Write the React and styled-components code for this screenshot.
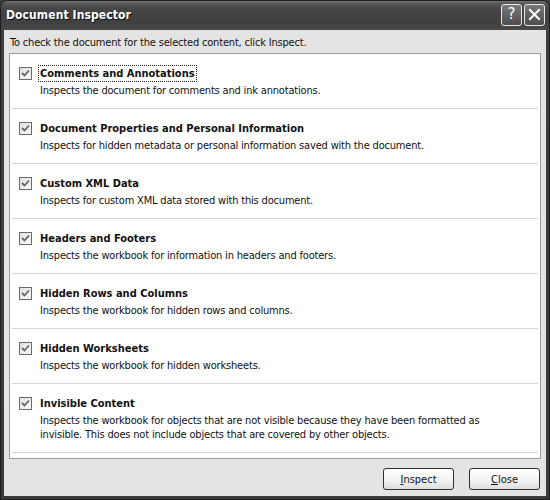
import React from "react";
import styled, { createGlobalStyle } from "styled-components";

const Global = createGlobalStyle`
  html, body { margin: 0; padding: 0; background: #3a3a3a; }
  body { font-family: "DejaVu Sans Condensed", "DejaVu Sans", Tahoma, sans-serif; }
  * { box-sizing: border-box; }
`;

const Window = styled.div`
  width: 550px;
  height: 500px;
  display: flex;
  flex-direction: column;
  background: linear-gradient(#6a6a6a, #3e3e3e 30px, #3a3a3a);
  border-radius: 8px 8px 0 0;
  border: 1px solid #1e1e1e;
  overflow: hidden;
`;

const TitleBar = styled.div`
  height: 29px;
  flex: none;
  display: flex;
  align-items: center;
  padding: 0 4px 0 5px;
  background: linear-gradient(#777 0px, #5a5a5a 2px, #454545 8px, #404040 22px, #4a4a4a 29px);
`;

const Title = styled.div`
  flex: 1;
  color: #fff;
  font-weight: bold;
  font-size: 12px;
  letter-spacing: 0.1px;
  text-shadow: 1px 1px 0 #111;
  padding-bottom: 1px;
`;

const TitleButton = styled.div`
  width: 21px;
  height: 22px;
  margin-left: 2px;
  margin-top: -2px;
  border: 1px solid #e8e8e8;
  border-radius: 3px;
  background: linear-gradient(#7a7a7a, #4c4c4c);
  display: flex;
  align-items: center;
  justify-content: center;
  color: #fff;
  font-family: "DejaVu Sans", sans-serif;
  font-size: 15px;
  line-height: 1;
`;

const Body = styled.div`
  flex: 1;
  margin: 0 3px 3px 3px;
  background: #e4e4e4;
  display: flex;
  flex-direction: column;
  padding: 6px 5px 0 5px;
  color: #111;
  font-size: 11px;
  letter-spacing: -0.18px;
`;

const Intro = styled.div`
  line-height: 14px;
  height: 16px;
  padding-left: 1px;
`;

const Panel = styled.div`
  margin-top: 1px;
  height: 406px;
  background: #fff;
  border: 1px solid #9a9a9a;
  padding: 0 2px;
`;

const Row = styled.div`
  display: grid;
  grid-template-columns: 13px 1fr;
  column-gap: 8px;
  row-gap: 4px;
  padding: 13px 0 10px 7px;
  border-bottom: 1px solid #d4d4d4;
`;

const Check = styled.div`
  width: 13px;
  height: 13px;
  border: 1px solid #6a6a6a;
  background: linear-gradient(135deg, #e0e0e0, #fafafa);
  display: flex;
  align-items: center;
  justify-content: center;
`;

const RowTitle = styled.div`
  font-weight: bold;
  letter-spacing: 0;
  line-height: 13px;
  height: 13px;
  display: flex;
  align-items: center;
`;

const TitleText = styled.span`
  padding: 1px 1px;
  margin-left: -2px;
  border: 1px dotted ${(p) => (p.$focus ? "#222" : "transparent")};
`;

const Desc = styled.div`
  grid-column: 2;
  line-height: 14px;
  max-width: 470px;
`;

const Footer = styled.div`
  flex: 1;
  display: flex;
  justify-content: flex-end;
  align-items: flex-start;
  gap: 15px;
  padding: 9px 1px 0 0;
`;

const Button = styled.button`
  width: 71px;
  height: 22px;
  font-family: inherit;
  font-size: 11px;
  color: #111;
  border: 1px solid #2e2e2e;
  border-radius: 3px;
  background: linear-gradient(#ffffff, #f2f2f2 60%, #dcdcdc);
  padding: 0;
`;

const CheckMark = () => (
  <svg width="9" height="9" viewBox="0 0 9 9">
    <path d="M1 4 L3.5 6.5 L8 1.5" fill="none" stroke="#666" strokeWidth="1.8" />
  </svg>
);

const items = [
  ["Comments and Annotations", "Inspects the document for comments and ink annotations."],
  ["Document Properties and Personal Information", "Inspects for hidden metadata or personal information saved with the document."],
  ["Custom XML Data", "Inspects for custom XML data stored with this document."],
  ["Headers and Footers", "Inspects the workbook for information in headers and footers."],
  ["Hidden Rows and Columns", "Inspects the workbook for hidden rows and columns."],
  ["Hidden Worksheets", "Inspects the workbook for hidden worksheets."],
  ["Invisible Content", "Inspects the workbook for objects that are not visible because they have been formatted as invisible. This does not include objects that are covered by other objects."],
];

export default function App() {
  return (
    <>
      <Global />
      <Window>
        <TitleBar>
          <Title>Document Inspector</Title>
          <TitleButton>?</TitleButton>
          <TitleButton>
            <svg width="13" height="13" viewBox="0 0 13 13">
              <path d="M2 2 L11 11 M11 2 L2 11" stroke="#fff" strokeWidth="2" strokeLinecap="square" />
            </svg>
          </TitleButton>
        </TitleBar>
        <Body>
          <Intro>To check the document for the selected content, click Inspect.</Intro>
          <Panel>
            {items.map(([t, d], i) => (
              <Row key={t}>
                <Check><CheckMark /></Check>
                <RowTitle><TitleText $focus={i === 0}>{t}</TitleText></RowTitle>
                <Desc>{d}</Desc>
              </Row>
            ))}
          </Panel>
          <Footer>
            <Button><u>I</u>nspect</Button>
            <Button><u>C</u>lose</Button>
          </Footer>
        </Body>
      </Window>
    </>
  );
}
